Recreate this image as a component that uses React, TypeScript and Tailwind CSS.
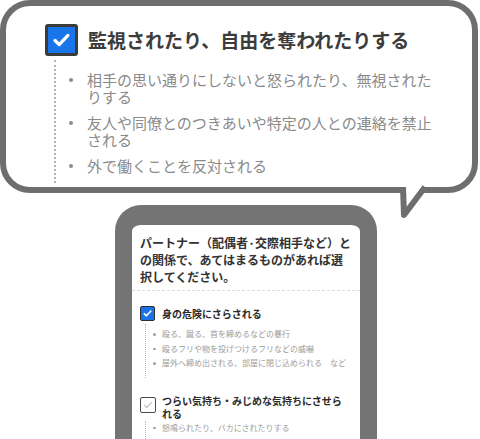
import React from "react";

function CheckMark({ color, width }: { color: string; width: number }) {
  return (
    <svg viewBox="0 0 24 24" className="h-full w-full" fill="none">
      <path
        d="M5 12.5l4.5 4.5L19 7"
        stroke={color}
        strokeWidth={width}
        strokeLinecap="round"
        strokeLinejoin="round"
      />
    </svg>
  );
}

const bubbleItems = [
  "相手の思い通りにしないと怒られたり、無視されたりする",
  "友人や同僚とのつきあいや特定の人との連絡を禁止される",
  "外で働くことを反対される",
];

const dangerItems = [
  "殴る、蹴る、首を締めるなどの暴行",
  "殴るフリや物を投げつけるフリなどの威嚇",
  "屋外へ締め出される、部屋に閉じ込められる　など",
];

export default function App() {
  return (
    <div className="relative h-[439px] w-[480px] overflow-hidden bg-white font-['Noto_Sans_CJK_JP','Noto_Sans',sans-serif]">
      {/* Speech bubble */}
      <div className="h-[193px] w-[478px] rounded-[30px] border-[6px] border-[#6e6e6e] bg-white pl-[39px] pt-[18px]">
        <div className="flex items-center">
          <div className="h-[32px] w-[33px] rounded-[3px] border-[3px] border-[#3b3b3b] bg-[#1875ea] p-[2px]">
            <CheckMark color="#ffffff" width={3.6} />
          </div>
          <div className="ml-[10px] text-[19px] font-bold leading-[24px] text-[#3c3c3c]">
            監視されたり、自由を奪われたりする
          </div>
        </div>
        <div className="ml-[9px] mt-[4px] h-[123px] border-l-2 border-dotted border-[#b4b4b4] pt-[12px]">
          <ul className="flex w-[380px] flex-col gap-[10px]">
            {bubbleItems.map((t) => (
              <li key={t} className="flex items-start">
                <span className="flex h-[16.5px] w-[31px] shrink-0 items-center pl-[13px]">
                  <span className="h-[4px] w-[4px] rounded-full bg-[#8c8c8c]" />
                </span>
                <span className="w-[350px] text-[15px] leading-[16.5px] text-[#8a8a8a]">{t}</span>
              </li>
            ))}
          </ul>
        </div>
      </div>

      {/* Bubble tail */}
      <svg className="absolute left-[390px] top-[180px]" width="44" height="44" viewBox="0 0 44 44">
        <polygon points="13,6 14,35 35,6" fill="#ffffff" />
        <polyline
          points="13,7 14,35 35,7"
          fill="none"
          stroke="#6e6e6e"
          strokeWidth="6"
          strokeLinejoin="round"
        />
      </svg>

      {/* Phone */}
      <div className="ml-[115px] mt-[12px] h-[260px] w-[262px] rounded-t-[26px] border-x-[17px] border-t-[20px] border-[#747474] bg-white">
        <div className="px-[8px] pt-[8.5px] text-[12px] font-bold leading-[17px] text-[#333333]">
          パートナー（配偶者·交際相手など）との関係で、あてはまるものがあれば選択してください。
        </div>
        <div className="mt-[5px] border-b border-dashed border-[#dcdcdc]" />

        <div className="pl-[8px] pt-[15.5px]">
          <div className="flex items-center">
            <div className="h-[15px] w-[15px] rounded-[2px] border-[1.5px] border-[#2f2f2f] bg-[#1b72e6] p-[1px]">
              <CheckMark color="#ffffff" width={3.6} />
            </div>
            <div className="ml-[7px] text-[10px] font-bold leading-[15px] text-[#2a2a2a]">身の危険にさらされる</div>
          </div>
          <div className="ml-[5px] mt-[3px] h-[54px] border-l border-dotted border-[#b8b8b8] pt-[3px]">
            {dangerItems.map((t) => (
              <div key={t} className="flex items-center">
                <span className="flex h-[14.5px] w-[16px] shrink-0 items-center pl-[7px]">
                  <span className="h-[2.5px] w-[2.5px] rounded-full bg-[#a0a0a0]" />
                </span>
                <span className="text-[8px] leading-[14.5px] text-[#9c9c9c]">{t}</span>
              </div>
            ))}
          </div>

          <div className="mt-[15.5px] flex items-start">
            <div className="mt-[3.5px] h-[16px] w-[16px] shrink-0 rounded-[2px] border-[1.5px] border-[#4a4a4a] bg-white p-[1px]">
              <CheckMark color="#c8c8c8" width={2.4} />
            </div>
            <div className="ml-[6px] w-[186px] text-[10px] font-bold leading-[13px] text-[#2a2a2a]">
              つらい気持ち・みじめな気持ちにさせられる
            </div>
          </div>
          <div className="ml-[5px] mt-[1px] h-[30px] border-l border-dotted border-[#b8b8b8]">
            <div className="flex items-center">
              <span className="flex h-[14.5px] w-[16px] shrink-0 items-center pl-[7px]">
                <span className="h-[2.5px] w-[2.5px] rounded-full bg-[#a0a0a0]" />
              </span>
              <span className="text-[8px] leading-[14.5px] text-[#9c9c9c]">怒鳴られたり、バカにされたりする</span>
            </div>
          </div>
        </div>
      </div>
    </div>
  );
}
